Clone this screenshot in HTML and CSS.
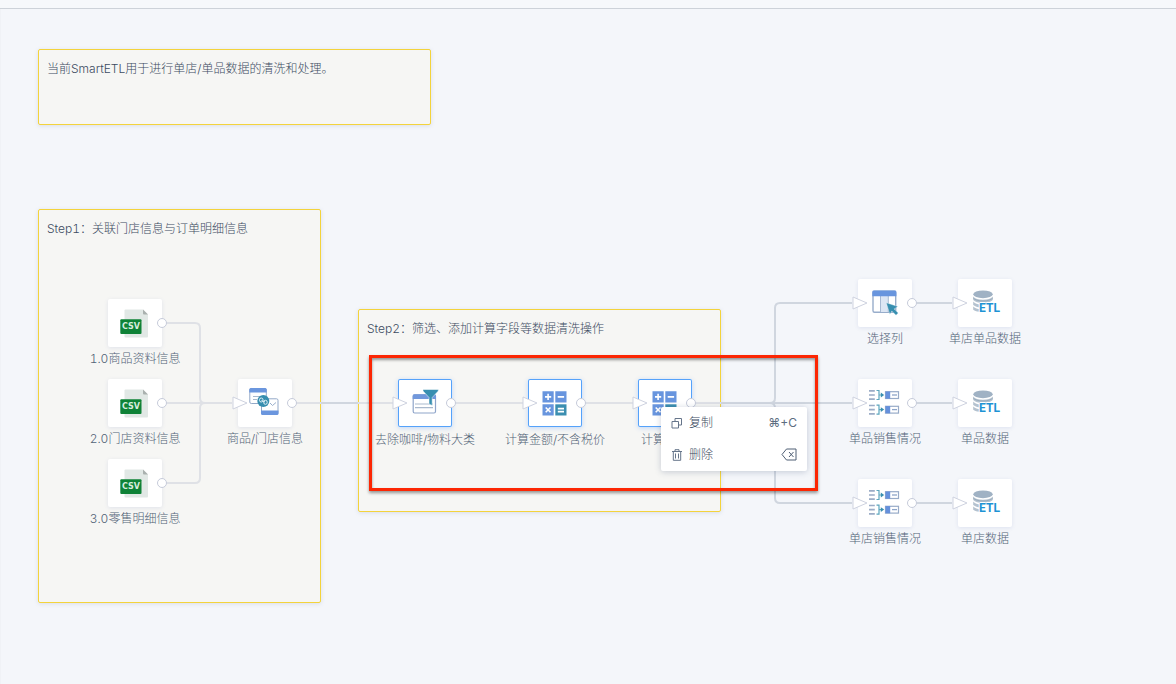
FILE: index.html
```html
<!DOCTYPE html>
<html lang="zh-CN">
<head>
<meta charset="utf-8">
<title>SmartETL</title>
<link rel="stylesheet" href="styles.css">
</head>
<body>
<svg class="sprite" aria-hidden="true">
  <symbol id="csv" viewBox="0 0 54 48">
    <path d="M17.500 10.500H35L40 15.500V37.500Q40 38.500 39 38.500H17.500Q16.500 38.500 16.500 37.500V11.500Q16.500 10.500 17.500 10.500Z" fill="#e1e8e5"/>
    <path d="M35 10.500L40 15.500H36Q35 15.500 35 14.500Z" fill="#a9b0ae"/>
    <rect x="12.300" y="20.300" width="21.200" height="14.700" rx="1" fill="#0f8237"/>
  </symbol>
  <symbol id="join" viewBox="0 0 54 48">
    <rect x="11.800" y="9.500" width="16.500" height="15" rx="1.500" fill="#fff" stroke="#93a9c8"/>
    <path d="M11.300 13.500V10.500Q11.300 9 12.800 9H27.200Q28.700 9 28.700 10.500V13.500Z" fill="#6b96de"/>
    <path d="M15 17.500h7M15 20.500h4" stroke="#a9b9cd"/>
    <rect x="23.500" y="19.800" width="16.500" height="15.500" rx="1.500" fill="#fff" stroke="#93a9c8"/>
    <path d="M23 31.500H40.500V34.500Q40.500 36 39 36H24.500Q23 36 23 34.500Z" fill="#6b96de"/>
    <path d="M32 24l2.500 2.500L38 23.500" fill="none" stroke="#9ab0cc"/>
    <circle cx="25.300" cy="22" r="6" fill="#368eaf"/>
    <rect x="21.500" y="19" width="3.500" height="4" rx="1.700" fill="none" stroke="#e0f0f6"/>
    <rect x="25.700" y="21.300" width="3.500" height="4" rx="1.700" fill="none" stroke="#e0f0f6"/>
    <path d="M23.500 21.500l3.500 1.500" stroke="#e0f0f6"/>
  </symbol>
  <symbol id="filter" viewBox="0 0 54 48">
    <rect x="15.200" y="15.800" width="22.300" height="18.200" rx="1.500" fill="#fff" stroke="#8fa5ca" stroke-width="1.200"/>
    <path d="M14.700 20V16.800Q14.700 15.300 16.200 15.300H36.500Q38 15.300 38 16.800V20Z" fill="#7198dc"/>
    <path d="M17 25h18M17 28.700h18" stroke="#a9b9cd" stroke-width="1.200"/>
    <path d="M25 10.500H40.300V12L34.200 18.500V26.500L31 25V18.500L25 12Z" fill="#388fb0" stroke="#fff" stroke-width=".5"/>
  </symbol>
  <symbol id="calc" viewBox="0 0 54 48">
    <path d="M14.500 12.300h11.200v11.200H14.500zM27.300 12.300h11.200v11.200H27.300zM14.500 25.300h11.200v11.200H14.500z" fill="#6895de"/>
    <path d="M27.300 25.300h11.200v11.200H27.300z" fill="#3b8eb0"/>
    <path d="M17 17.900h6.200M20.100 14.800V21M29.700 17.900h6.400M17.700 28.500l4.800 4.800M22.500 28.500l-4.800 4.800M29.800 29.600h6.200M29.800 32.600h6.200" stroke="#fff" stroke-width="1.600"/>
  </symbol>
  <symbol id="columns" viewBox="0 0 54 48">
    <rect x="15" y="12.300" width="22.700" height="21" rx="1.500" fill="#fff" stroke="#98adcb" stroke-width="1.400"/>
    <path d="M22.300 17h8V33h-8z" fill="#dce6f4"/>
    <path d="M22.500 17v16M30.300 17v16" stroke="#a7b9d3"/>
    <path d="M14.300 17.300V13Q14.300 11.600 15.800 11.600H36.900Q38.400 11.600 38.400 13V17.300Z" fill="#6895de"/>
    <path d="M28.300 23.800L39.800 27.500L36.200 29.900L40.200 34L38 36.200L33.800 32.100L31.900 35.300Z" fill="#388fb0" stroke="#fff" stroke-width=".3"/>
  </symbol>
  <symbol id="etl" viewBox="0 0 54 48">
    <ellipse cx="25" cy="15.300" rx="9.700" ry="3.900" fill="#a0b2c4"/>
    <path d="M15.200 17.500Q18 20.800 25 20.800T34.800 17.500V21Q32 24 25 24T15.200 21ZM15.200 22.500Q18 25.700 25 25.700V28.700Q18 28.500 15.200 26ZM15.200 27.500Q18 30.500 25 30.500V33Q18 33 15.200 30.800Z" fill="#b5c2cf"/>
    <path d="M15.200 19Q18 22 25 22T34.800 19" fill="none" stroke="#93a7b9" stroke-width=".8"/>
  </symbol>
  <symbol id="group" viewBox="0 0 54 48">
    <g id="group-row">
      <path d="M11 11.900h5.800M11 16h5.800M11 20.200h5.800" stroke="#9bacc6" stroke-width="1.700"/>
      <path d="M18.500 11.500h2.500v9h-2.500M21 16h3" fill="none" stroke="#5ba5bd" stroke-width="1.200"/>
      <path d="M22.800 13.600L26.200 16L22.800 18.400Z" fill="#388fb0"/>
      <rect x="27.500" y="12.700" width="13" height="6.800" fill="#fff" stroke="#98abc8" stroke-width="1.200"/>
      <path d="M27.500 12.500h4.700v7.200h-4.700z" fill="#6590dc"/>
      <path d="M34 16h5" stroke="#8da5ca" stroke-width="1.300"/>
    </g>
    <use href="#group-row" y="14.600"/>
  </symbol>
  <symbol id="arrow" viewBox="0 0 16 14"><path d="M1 1V13L15 7Z" fill="#fff" stroke="#cfd3e0"/></symbol>
</svg>

<header class="topbar"></header>
<main class="canvas">
  <section class="note note-intro">当前SmartETL用于进行单店/单品数据的清洗和处理。</section>
  <section class="note note-step1">Step1：关联门店信息与订单明细信息</section>
  <section class="note note-step2">Step2：筛选、添加计算字段等数据清洗操作</section>

  <svg class="wires" aria-hidden="true">
    <g class="wire-soft">
      <path d="M167 314H195Q200 314 200 319V389Q200 394 205 394"/>
      <path d="M167 474H195Q200 474 200 469V399Q200 394 205 394"/>
      <path d="M167 394H232M297 394H321M358 394H394M456 394H524M586 394H634M696 394H721"/>
    </g>
    <g class="wire">
      <path d="M321 394H358M721 394H852M917 394H952M917 294H952M917 494H952"/>
      <path d="M770 394Q775 394 775 389V299Q775 294 780 294H852"/>
      <path d="M770 394Q775 394 775 399V489Q775 494 780 494H852"/>
    </g>
  </svg>

  <div class="node col-source row-1"><div class="card"><svg><use href="#csv"/></svg><b class="csv-text">CSV</b><i class="port"></i></div><span>1.0商品资料信息</span></div>
  <div class="node col-source row-2"><div class="card"><svg><use href="#csv"/></svg><b class="csv-text">CSV</b><i class="port"></i></div><span>2.0门店资料信息</span></div>
  <div class="node col-source row-3"><div class="card"><svg><use href="#csv"/></svg><b class="csv-text">CSV</b><i class="port"></i></div><span>3.0零售明细信息</span></div>
  <div class="node col-join row-2"><div class="card"><svg><use href="#join"/></svg><svg class="inlet"><use href="#arrow"/></svg><i class="port"></i></div><span>商品/门店信息</span></div>

  <div class="node selected col-filter row-2"><div class="card"><svg><use href="#filter"/></svg><svg class="inlet"><use href="#arrow"/></svg><i class="port"></i></div><span>去除咖啡/物料大类</span></div>
  <div class="node selected col-calc row-2"><div class="card"><svg><use href="#calc"/></svg><svg class="inlet"><use href="#arrow"/></svg><i class="port"></i></div><span>计算金额/不含税价</span></div>
  <div class="node selected col-calc2 row-2"><div class="card"><svg><use href="#calc"/></svg><svg class="inlet"><use href="#arrow"/></svg><i class="port"></i></div><span>计算字段</span></div>

  <div class="node col-shape row-top"><div class="card"><svg><use href="#columns"/></svg><svg class="inlet"><use href="#arrow"/></svg><i class="port"></i></div><span>选择列</span></div>
  <div class="node col-shape row-2"><div class="card"><svg><use href="#group"/></svg><svg class="inlet"><use href="#arrow"/></svg><i class="port"></i></div><span>单品销售情况</span></div>
  <div class="node col-shape row-bottom"><div class="card"><svg><use href="#group"/></svg><svg class="inlet"><use href="#arrow"/></svg><i class="port"></i></div><span>单店销售情况</span></div>
  <div class="node col-output row-top"><div class="card"><svg><use href="#etl"/></svg><b class="etl-text">ETL</b><svg class="inlet"><use href="#arrow"/></svg></div><span>单店单品数据</span></div>
  <div class="node col-output row-2"><div class="card"><svg><use href="#etl"/></svg><b class="etl-text">ETL</b><svg class="inlet"><use href="#arrow"/></svg></div><span>单品数据</span></div>
  <div class="node col-output row-bottom"><div class="card"><svg><use href="#etl"/></svg><b class="etl-text">ETL</b><svg class="inlet"><use href="#arrow"/></svg></div><span>单店数据</span></div>

  <div class="highlight"></div>
  <div class="menu" role="menu">
    <button type="button" role="menuitem">
      <svg class="menu-icon" viewBox="0 0 12 12"><path d="M1 4.500h6.500V11H1zM4 4.500V1.500h6.500V8H7.500"/></svg>
      <span>复制</span><kbd>⌘+C</kbd>
    </button>
    <button type="button" role="menuitem">
      <svg class="menu-icon" viewBox="0 0 12 12"><path d="M1 2.500h10M4 2.500V.700h4v1.800M2.300 2.500V11.300h7.400V2.500M4.500 4.500v5M7.500 4.500v5"/></svg>
      <span>删除</span>
      <svg class="erase" viewBox="0 0 16 14"><path d="M5.500 1H15V12H5.500L1 6.500ZM8 4l4.500 5M12.500 4L8 9"/></svg>
    </button>
  </div>
</main>
</body>
</html>
```
FILE: styles.css
```css
* { box-sizing: border-box; }

body {
  margin: 0;
  min-height: 100vh;
  display: flex;
  flex-direction: column;
  background: #f4f6fa;
  color: #526377;
  font: 300 12px/18px Inter, "Noto Sans CJK SC", sans-serif;
  font-variant-numeric: tabular-nums;
}

.sprite { position: absolute; width: 0; height: 0; }

.topbar { height: 9px; background: #f6f8fb; border-bottom: 1px solid #cdd2d9; }

.canvas {
  position: relative;
  flex: 1;
  overflow: hidden;
  border-left: 1px solid #f0f2f6;
}

/* Canvas items are measured from the window edge, so they step back over the border. */
.canvas > * { position: absolute; margin-left: -1px; }

.note {
  padding: 10px 8px;
  border: 1px solid #f3d33c;
  border-radius: 2px;
  background: #f6f6f4;
  box-shadow: 0 1px 4px rgba(80, 100, 150, .16);
  color: #3c4b61;
}
.note-intro { left: 38px; top: 40px; width: 393px; height: 76px; }
.note-step1 { left: 38px; top: 200px; width: 283px; height: 394px; }
.note-step2 { left: 358px; top: 300px; width: 363px; height: 203px; }

.wires { left: 0; top: 0; width: 100%; height: 100%; fill: none; stroke-width: 2; }
.wire { stroke: #d0d6df; }
.wire-soft { stroke: #dfe1e6; }

.node {
  width: 54px;
  display: flex;
  flex-direction: column;
  align-items: center;
  gap: 3px;
  white-space: nowrap;
}
.selected { gap: 4px; }
.card {
  position: relative;
  width: 54px;
  height: 48px;
  border-radius: 2px;
  background: #fff;
  box-shadow: 0 1px 4px rgba(80, 100, 180, .13);
}
.selected .card {
  box-shadow: inset 0 0 0 1px #55a2fa, 0 1px 5px rgba(64, 140, 255, .3);
}
.card svg { display: block; width: 54px; height: 48px; }
.card .inlet { position: absolute; left: -6px; top: 17px; width: 16px; height: 14px; }
.port {
  position: absolute;
  right: -5px;
  top: 19px;
  width: 10px;
  height: 10px;
  border: 1px solid #c6cbda;
  border-radius: 50%;
  background: #fff;
}
.selected .port { right: -4px; }

.col-source { left: 108px; }
.col-join { left: 238px; }
.col-filter { left: 398px; }
.col-calc { left: 528px; }
.col-calc2 { left: 638px; }
.col-shape { left: 858px; }
.col-output { left: 958px; }
.row-top { top: 270px; }
.row-1 { top: 290px; }
.row-2 { top: 370px; }
.row-3 { top: 450px; }
.row-bottom { top: 470px; }

.csv-text,
.etl-text {
  position: absolute;
  font-weight: 700;
  line-height: 14px;
  text-align: center;
}
.csv-text {
  left: 12px;
  top: 21px;
  width: 22px;
  font-family: "DejaVu Sans", sans-serif;
  font-size: 8px;
  color: #d8ecdf;
}
.etl-text {
  left: 21px;
  top: 22px;
  width: 21px;
  font-family: "Liberation Sans Narrow", Roboto, sans-serif;
  font-size: 12px;
  color: #1e93d4;
  text-shadow: 1px 0 #fff, -1px 0 #fff, 0 -1px #fff;
}

.highlight {
  left: 369px;
  top: 346px;
  width: 449px;
  height: 136px;
  border: 3px solid #fc2603;
  box-shadow: 0 2px 3px rgba(0, 0, 0, .4), inset 0 2px 3px rgba(0, 0, 0, .4);
}

.menu {
  left: 661px;
  top: 398px;
  width: 146px;
  display: flex;
  flex-direction: column;
  border-radius: 2px;
  background: #fff;
  box-shadow: 0 1px 6px rgba(50, 70, 110, .25);
}
.menu button {
  height: 32px;
  display: flex;
  align-items: center;
  gap: 6px;
  padding: 0 10px;
  border: 0;
  background: none;
  color: #3c4b61;
  font: inherit;
}
.menu span { flex: 1; text-align: left; }
.menu kbd { font: 12px/18px Inter, "DejaVu Sans", sans-serif; color: #5c6d80; }
.menu svg { fill: none; stroke: #66758a; }
.menu-icon { width: 12px; height: 12px; }
.menu .erase { width: 16px; height: 14px; stroke: #4f5f75; }
```
